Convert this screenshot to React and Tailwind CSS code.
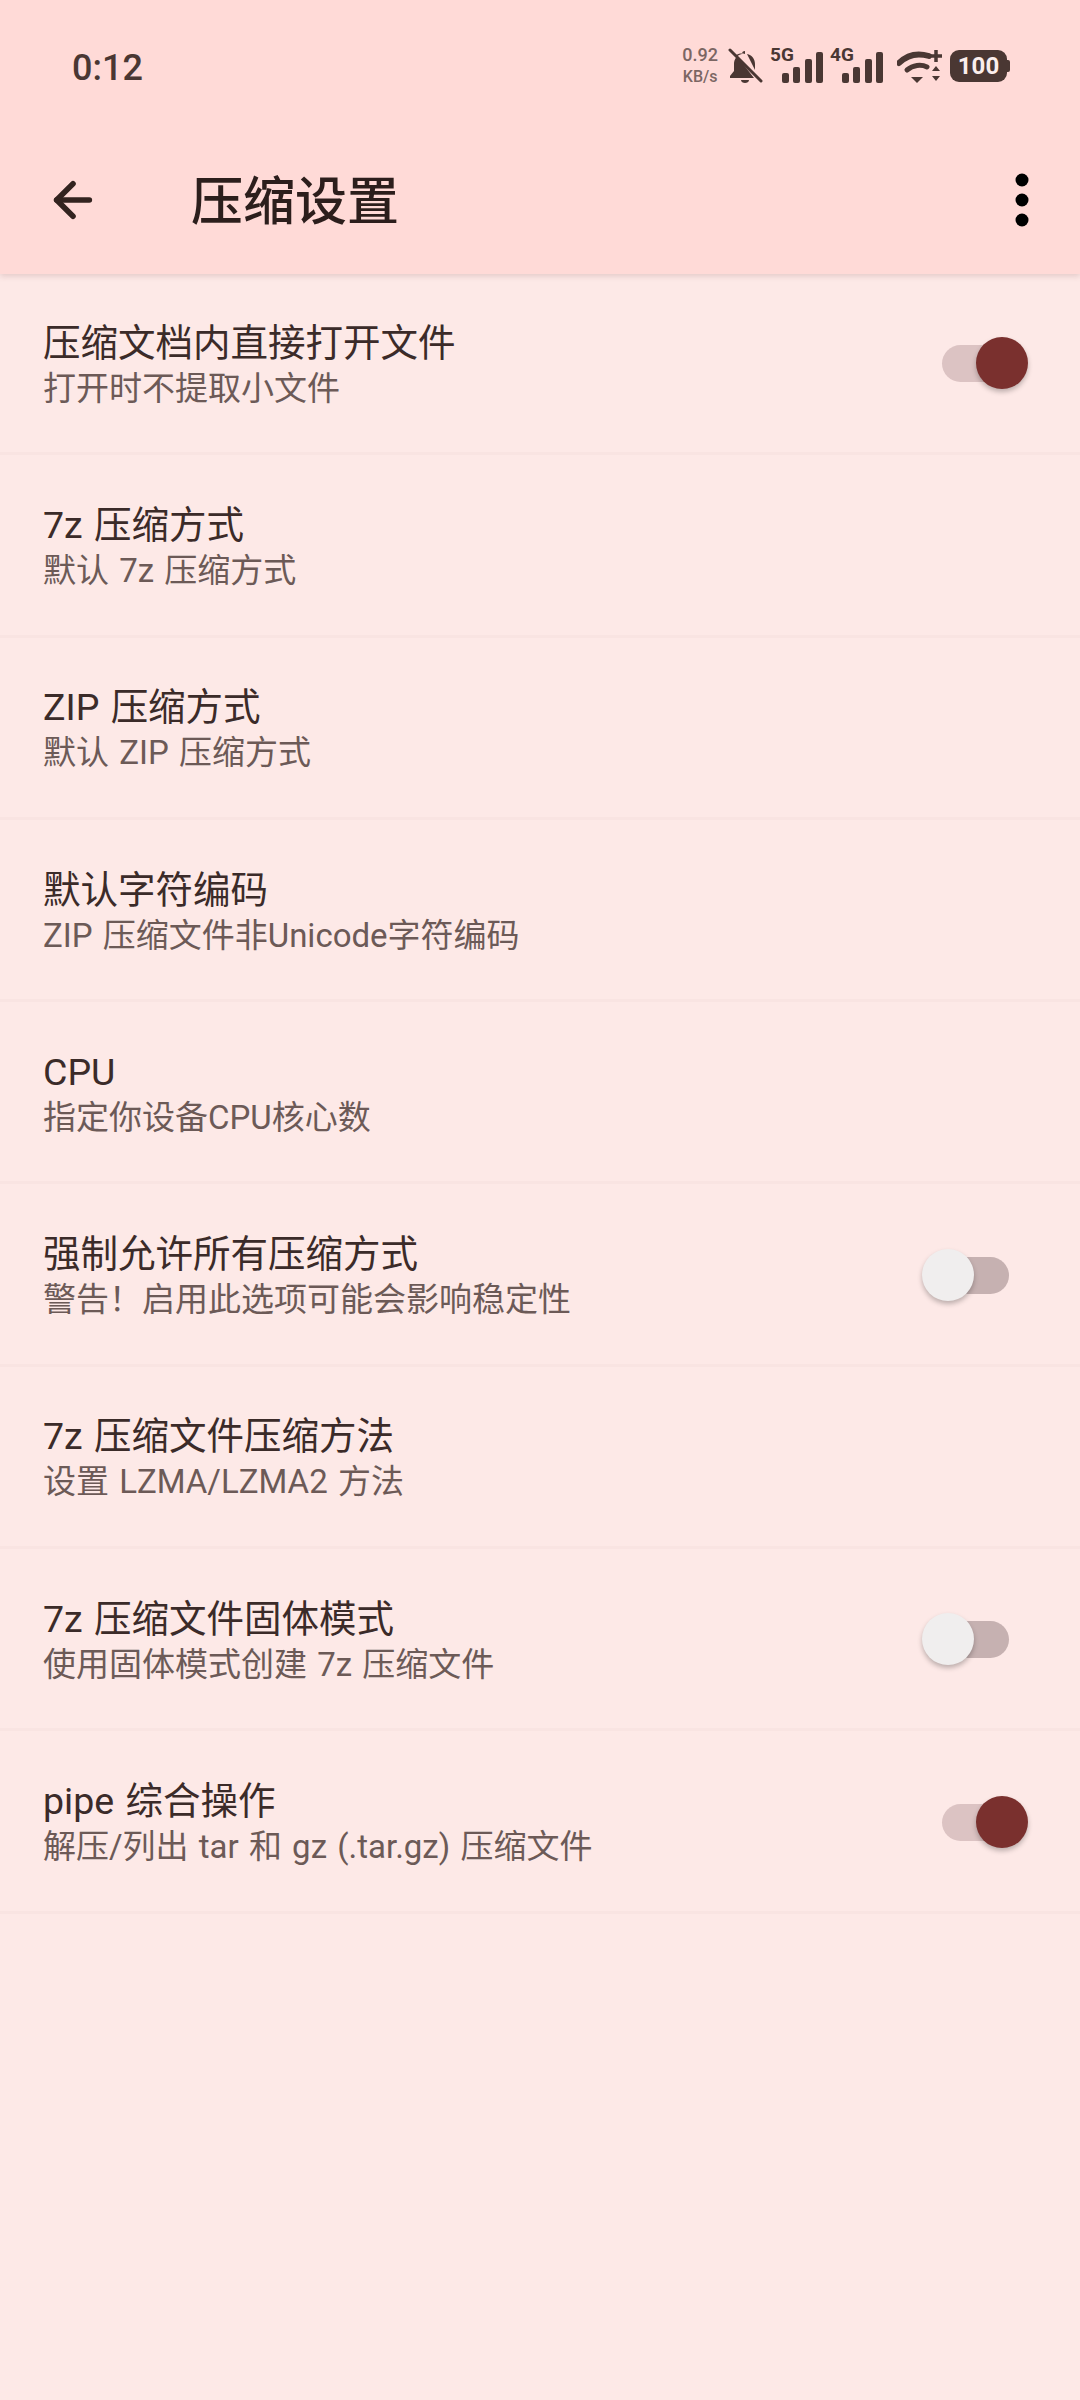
import React from 'react';
import { ArrowLeft } from 'lucide-react';

const rows = [
  { title: '压缩文档内直接打开文件', sub: '打开时不提取小文件', toggle: 'on' },
  { title: '7z 压缩方式', sub: '默认 7z 压缩方式' },
  { title: 'ZIP 压缩方式', sub: '默认 ZIP 压缩方式' },
  { title: '默认字符编码', sub: 'ZIP 压缩文件非Unicode字符编码' },
  { title: 'CPU', sub: '指定你设备CPU核心数' },
  { title: '强制允许所有压缩方式', sub: '警告！启用此选项可能会影响稳定性', toggle: 'off' },
  { title: '7z 压缩文件压缩方法', sub: '设置 LZMA/LZMA2 方法' },
  { title: '7z 压缩文件固体模式', sub: '使用固体模式创建 7z 压缩文件', toggle: 'off' },
  { title: 'pipe 综合操作', sub: '解压/列出 tar 和 gz (.tar.gz) 压缩文件', toggle: 'on' },
];

const Toggle = ({ on }) => (
  <div className={`relative w-[67px] h-[37px] rounded-full ${on ? 'bg-[#dcc3c3]' : 'bg-[#c6b1b1]'}`}>
    {on ? (
      <div className="absolute right-[-19px] top-[-8px] w-[52px] h-[52px] rounded-full bg-[#7a302e] shadow-[0_3px_5px_rgba(0,0,0,0.25)]" />
    ) : (
      <div className="absolute left-[-20px] top-[-8px] w-[52px] h-[52px] rounded-full bg-[#f0eeee] shadow-[0_3px_5px_rgba(0,0,0,0.25)]" />
    )}
  </div>
);

const Signal = ({ label }) => (
  <div className="relative w-[53px] h-[36px]">
    <span className="absolute left-0 top-[-2px] text-[19px] leading-[18px] font-bold text-[#4a3733]">{label}</span>
    <svg className="absolute right-0 bottom-0" width="41" height="32" viewBox="0 0 41 32" fill="#4a3733">
      <rect x="0" y="21" width="7" height="10" rx="2" />
      <rect x="11" y="15" width="7" height="16" rx="2" />
      <rect x="23" y="7" width="7" height="24" rx="2" />
      <rect x="34" y="0" width="7" height="31" rx="2" />
    </svg>
  </div>
);

const StatusBar = () => (
  <div className="h-[92px] flex items-end justify-between pl-[72px] pr-[70px] text-[#4a3733]">
    <span className="text-[36px] leading-[48px] font-medium">0:12</span>
    <div className="flex items-center gap-[7px] mb-[4px]">
      <div className="flex flex-col items-center mr-[2px] text-[18px] leading-[22px] font-medium text-[#7b6663]">
        <span>0.92</span>
        <span className="text-[16px]">KB/s</span>
      </div>
      <svg width="36" height="36" viewBox="0 0 36 36" fill="#4a3733">
        <path d="M18 3c-2 0-3 1-3 3-5 1-8 5-8 10v7l-4 5v2h24L9 7c2-1 5-2 9-1zM28 22v-6c0-5-3-9-8-10z" />
        <path d="M14 32h8c0 2-2 3-4 3s-4-1-4-3z" />
        <path d="M3 2l31 31" stroke="#4a3733" strokeWidth="3" strokeLinecap="round" />
      </svg>
      <Signal label="5G" />
      <Signal label="4G" />
      <svg width="46" height="36" viewBox="0 0 46 36" fill="none" className="ml-[7px]">
        <path d="M2 15C11 6 22 5 32 8" stroke="#4a3733" strokeWidth="6" strokeLinecap="round" />
        <path d="M10 22c6-5 14-6 20-3" stroke="#4a3733" strokeWidth="5" strokeLinecap="round" />
        <path d="M14 29h12l-6 6z" fill="#4a3733" />
        <path d="M39 2v12M33 8h12" stroke="#4a3733" strokeWidth="3.5" />
        <path d="M35 23l4-5 4 5zM35 28l4 5 4-5z" fill="#4a3733" />
      </svg>
      <div className="flex items-center">
        <div className="w-[57px] h-[32px] rounded-[9px] bg-[#4a3733] flex items-center justify-center text-[#fbeeec] text-[24px] leading-none font-bold">100</div>
        <div className="w-[3px] h-[12px] rounded-r-[2px] bg-[#4a3733]" />
      </div>
    </div>
  </div>
);

const SettingRow = ({ title, sub, toggle }) => (
  <div className="h-[182.3px] shrink-0 pt-[2px] pl-[43px] pr-[71px] flex items-center justify-between border-b-[3px] border-[#f9e4e2]">
    <div className="flex flex-col pt-[4px] [word-spacing:2px]">
      <span className="text-[37.5px] leading-[46px] text-[#3b2b29]">{title}</span>
      <span className="text-[33px] leading-[46px] text-[#6c5a57]">{sub}</span>
    </div>
    {toggle && <Toggle on={toggle === 'on'} />}
  </div>
);

export default function App() {
  return (
    <div className="w-[1080px] h-[2400px] bg-[#fde9e7] overflow-hidden font-['Roboto','Noto_Sans_CJK_SC',sans-serif]">
      <div className="bg-[#ffdad7] h-[274px] shadow-[0_2px_6px_rgba(120,70,70,0.2)] relative z-10">
        <StatusBar />
        <div className="h-[182px] flex items-center pt-[34px] pl-[45px] pr-[51px]">
          <ArrowLeft size={56} strokeWidth={2.4} className="text-[#33231f] shrink-0" />
          <span className="ml-[90px] flex-1 pt-[5px] text-[52px] leading-[60px] font-medium text-[#2c1e1c]">压缩设置</span>
          <svg width="14" height="54" viewBox="0 0 14 54" fill="#000">
            <circle cx="7" cy="7" r="6.5" />
            <circle cx="7" cy="27" r="6.5" />
            <circle cx="7" cy="47" r="6.5" />
          </svg>
        </div>
      </div>
      <div className="flex flex-col -mt-[1px]">
        {rows.map((r) => (
          <SettingRow key={r.title} {...r} />
        ))}
      </div>
    </div>
  );
}
